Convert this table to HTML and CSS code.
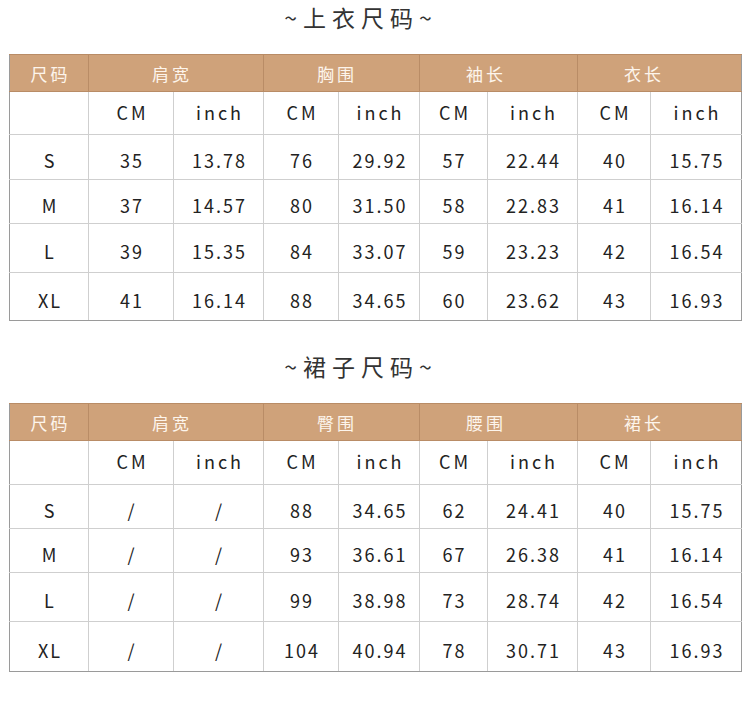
FILE: index.html
```html
<!DOCTYPE html>
<html lang="zh">
<head>
<meta charset="utf-8">
<title>尺码表</title>
<link rel="stylesheet" href="styles.css">
</head>
<body>
<section class="block block-top">
  <h2 class="title">~上衣尺码~</h2>
  <table class="size">
    <colgroup>
      <col class="c1"><col class="c2"><col class="c3"><col class="c4"><col class="c5"><col class="c6"><col class="c7"><col class="c8"><col class="c9">
    </colgroup>
    <thead>
      <tr class="head">
        <th>尺码</th><th colspan="2" class="g1">肩宽</th><th colspan="2" class="g2">胸围</th><th colspan="2" class="g3">袖长</th><th colspan="2" class="g4">衣长</th>
      </tr>
    </thead>
    <tbody>
      <tr class="units r1"><td></td><td>CM</td><td>inch</td><td>CM</td><td>inch</td><td>CM</td><td>inch</td><td>CM</td><td>inch</td></tr>
      <tr class="data r2"><td>S</td><td>35</td><td>13.78</td><td>76</td><td>29.92</td><td>57</td><td>22.44</td><td>40</td><td>15.75</td></tr>
      <tr class="data r3"><td>M</td><td>37</td><td>14.57</td><td>80</td><td>31.50</td><td>58</td><td>22.83</td><td>41</td><td>16.14</td></tr>
      <tr class="data r4"><td>L</td><td>39</td><td>15.35</td><td>84</td><td>33.07</td><td>59</td><td>23.23</td><td>42</td><td>16.54</td></tr>
      <tr class="data r5"><td>XL</td><td>41</td><td>16.14</td><td>88</td><td>34.65</td><td>60</td><td>23.62</td><td>43</td><td>16.93</td></tr>
    </tbody>
  </table>
</section>
<section class="block block-bottom">
  <h2 class="title">~裙子尺码~</h2>
  <table class="size">
    <colgroup>
      <col class="c1"><col class="c2"><col class="c3"><col class="c4"><col class="c5"><col class="c6"><col class="c7"><col class="c8"><col class="c9">
    </colgroup>
    <thead>
      <tr class="head">
        <th>尺码</th><th colspan="2" class="g1">肩宽</th><th colspan="2" class="g2">臀围</th><th colspan="2" class="g3">腰围</th><th colspan="2" class="g4">裙长</th>
      </tr>
    </thead>
    <tbody>
      <tr class="units s1"><td></td><td>CM</td><td>inch</td><td>CM</td><td>inch</td><td>CM</td><td>inch</td><td>CM</td><td>inch</td></tr>
      <tr class="data s2"><td>S</td><td>/</td><td>/</td><td>88</td><td>34.65</td><td>62</td><td>24.41</td><td>40</td><td>15.75</td></tr>
      <tr class="data s3"><td>M</td><td>/</td><td>/</td><td>93</td><td>36.61</td><td>67</td><td>26.38</td><td>41</td><td>16.14</td></tr>
      <tr class="data s4"><td>L</td><td>/</td><td>/</td><td>99</td><td>38.98</td><td>73</td><td>28.74</td><td>42</td><td>16.54</td></tr>
      <tr class="data s5"><td>XL</td><td>/</td><td>/</td><td>104</td><td>40.94</td><td>78</td><td>30.71</td><td>43</td><td>16.93</td></tr>
    </tbody>
  </table>
</section>
</body>
</html>
```
FILE: styles.css
```css
html, body {
  margin: 0;
  padding: 0;
  background: #ffffff;
}
body {
  width: 750px;
  font-family: "Noto Sans CJK SC", "Noto Sans", sans-serif;
  color: #222;
}
.block {
  padding-left: 9px;
}
.block-top {
  padding-top: 2px;
}
.block-bottom {
  padding-top: 30px;
}
.title {
  margin: 0 0 22px 0;
  width: 698px;
  height: 30px;
  line-height: 30px;
  text-align: center;
  font-size: 23px;
  font-weight: 400;
  letter-spacing: 6px;
  text-indent: 6px;
  color: #333;
}
.size {
  border-collapse: collapse;
  table-layout: fixed;
  width: 732px;
  border: 1px solid #9a9a9a;
}
.c1 { width: 79px; }
.c2 { width: 85px; }
.c3 { width: 90px; }
.c4 { width: 75px; }
.c5 { width: 81px; }
.c6 { width: 68px; }
.c7 { width: 90px; }
.c8 { width: 73px; }
.c9 { width: 91px; }
.size th {
  background: #cfa27a;
  color: #fdf5ec;
  font-weight: 400;
  font-size: 17px;
  letter-spacing: 3px;
  text-indent: 3px;
  height: 36px;
  padding: 0;
  border-left: 1px solid #b98c66;
  border-bottom: 1px solid #b98c66;
  border-top: 1px solid #b98c66;
}
.size th:first-child { border-left: 1px solid #9a9a9a; }
.size th.g1 { padding-right: 11px; }
.size th.g2 { padding-right: 12px; }
.size th.g3 { padding-right: 28px; }
.size th.g4 { padding-right: 34px; }
.size td {
  text-align: center;
  font-size: 18px;
  letter-spacing: 2px;
  text-indent: 2px;
  padding: 0;
  border: 1px solid #cfcfcf;
  color: #222;
}
.size td:first-child { border-left: 1px solid #9a9a9a; }
.size td:last-child { border-right: 1px solid #9a9a9a; }
.size tr:last-child td { border-bottom: 1px solid #9a9a9a; }
.units td {
  letter-spacing: 3px;
  text-indent: 3px;
  padding-bottom: 3px;
}
.data td { padding-top: 6px; }
.r1 td { height: 39px; }
.r2 td { height: 38px; }
.r3 td { height: 37px; }
.r4 td { height: 42px; }
.r5 td { height: 41px; }
.s1 td { height: 40px; }
.s2 td { height: 37px; }
.s3 td { height: 37px; }
.s4 td { height: 42px; }
.s5 td { height: 43px; }
```
